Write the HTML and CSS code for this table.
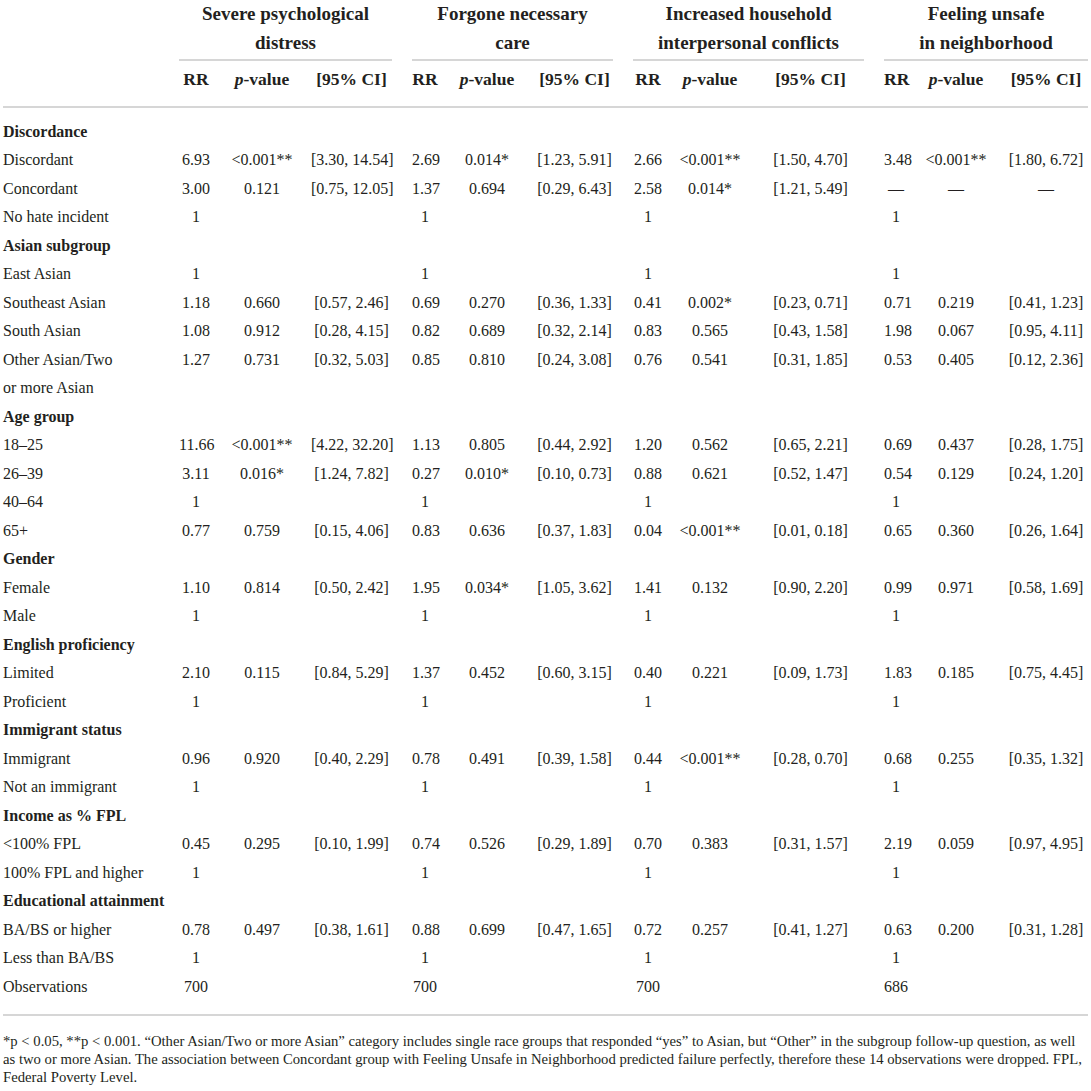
FILE: index.html
```html
<!DOCTYPE html>
<html lang="en">
<head>
  <meta charset="UTF-8">
  <title>Table</title>
  <link rel="stylesheet" href="styles.css">
</head>
<body>
  <table class="rr">
    <colgroup>
      <col class="c-lbl">
      <col class="c-rr1"><col class="c-p1"><col class="c-ci1">
      <col class="c-rr2"><col class="c-p2"><col class="c-ci2">
      <col class="c-rr3"><col class="c-p3"><col class="c-ci3">
      <col class="c-rr4"><col class="c-p4"><col class="c-ci4">
    </colgroup>
    <thead>
      <tr>
        <th class="lbl" rowspan="2"></th>
        <th class="g grp" colspan="3"><div class="grp-title">Severe psychological<br>distress</div></th>
        <th class="g grp" colspan="3"><div class="grp-title">Forgone necessary<br>care</div></th>
        <th class="g grp" colspan="3"><div class="grp-title">Increased household<br>interpersonal conflicts</div></th>
        <th class="g grp" colspan="3"><div class="grp-title">Feeling unsafe<br>in neighborhood</div></th>
      </tr>
      <tr class="sub">
        <th class="g">RR</th><th><i>p</i>-value</th><th>[95% CI]</th>
        <th class="g">RR</th><th><i>p</i>-value</th><th>[95% CI]</th>
        <th class="g">RR</th><th><i>p</i>-value</th><th>[95% CI]</th>
        <th class="g">RR</th><th><i>p</i>-value</th><th>[95% CI]</th>
      </tr>
    </thead>
    <tbody>
      <tr class="first"><td class="sec" colspan="13">Discordance</td></tr>
      <tr><td class="lbl">Discordant</td>
        <td class="g">6.93</td><td>&lt;0.001**</td><td>[3.30, 14.54]</td>
        <td class="g">2.69</td><td>0.014*</td><td>[1.23, 5.91]</td>
        <td class="g">2.66</td><td>&lt;0.001**</td><td>[1.50, 4.70]</td>
        <td class="g">3.48</td><td>&lt;0.001**</td><td>[1.80, 6.72]</td></tr>
      <tr><td class="lbl">Concordant</td>
        <td class="g">3.00</td><td>0.121</td><td>[0.75, 12.05]</td>
        <td class="g">1.37</td><td>0.694</td><td>[0.29, 6.43]</td>
        <td class="g">2.58</td><td>0.014*</td><td>[1.21, 5.49]</td>
        <td class="g">—</td><td>—</td><td>—</td></tr>
      <tr><td class="lbl">No hate incident</td>
        <td class="g">1</td><td></td><td></td>
        <td class="g">1</td><td></td><td></td>
        <td class="g">1</td><td></td><td></td>
        <td class="g">1</td><td></td><td></td></tr>

      <tr><td class="sec" colspan="13">Asian subgroup</td></tr>
      <tr><td class="lbl">East Asian</td>
        <td class="g">1</td><td></td><td></td>
        <td class="g">1</td><td></td><td></td>
        <td class="g">1</td><td></td><td></td>
        <td class="g">1</td><td></td><td></td></tr>
      <tr><td class="lbl">Southeast Asian</td>
        <td class="g">1.18</td><td>0.660</td><td>[0.57, 2.46]</td>
        <td class="g">0.69</td><td>0.270</td><td>[0.36, 1.33]</td>
        <td class="g">0.41</td><td>0.002*</td><td>[0.23, 0.71]</td>
        <td class="g">0.71</td><td>0.219</td><td>[0.41, 1.23]</td></tr>
      <tr><td class="lbl">South Asian</td>
        <td class="g">1.08</td><td>0.912</td><td>[0.28, 4.15]</td>
        <td class="g">0.82</td><td>0.689</td><td>[0.32, 2.14]</td>
        <td class="g">0.83</td><td>0.565</td><td>[0.43, 1.58]</td>
        <td class="g">1.98</td><td>0.067</td><td>[0.95, 4.11]</td></tr>
      <tr><td class="lbl">Other Asian/Two<br>or more Asian</td>
        <td class="g">1.27</td><td>0.731</td><td>[0.32, 5.03]</td>
        <td class="g">0.85</td><td>0.810</td><td>[0.24, 3.08]</td>
        <td class="g">0.76</td><td>0.541</td><td>[0.31, 1.85]</td>
        <td class="g">0.53</td><td>0.405</td><td>[0.12, 2.36]</td></tr>

      <tr><td class="sec" colspan="13">Age group</td></tr>
      <tr><td class="lbl">18–25</td>
        <td class="g">11.66</td><td>&lt;0.001**</td><td>[4.22, 32.20]</td>
        <td class="g">1.13</td><td>0.805</td><td>[0.44, 2.92]</td>
        <td class="g">1.20</td><td>0.562</td><td>[0.65, 2.21]</td>
        <td class="g">0.69</td><td>0.437</td><td>[0.28, 1.75]</td></tr>
      <tr><td class="lbl">26–39</td>
        <td class="g">3.11</td><td>0.016*</td><td>[1.24, 7.82]</td>
        <td class="g">0.27</td><td>0.010*</td><td>[0.10, 0.73]</td>
        <td class="g">0.88</td><td>0.621</td><td>[0.52, 1.47]</td>
        <td class="g">0.54</td><td>0.129</td><td>[0.24, 1.20]</td></tr>
      <tr><td class="lbl">40–64</td>
        <td class="g">1</td><td></td><td></td>
        <td class="g">1</td><td></td><td></td>
        <td class="g">1</td><td></td><td></td>
        <td class="g">1</td><td></td><td></td></tr>
      <tr><td class="lbl">65+</td>
        <td class="g">0.77</td><td>0.759</td><td>[0.15, 4.06]</td>
        <td class="g">0.83</td><td>0.636</td><td>[0.37, 1.83]</td>
        <td class="g">0.04</td><td>&lt;0.001**</td><td>[0.01, 0.18]</td>
        <td class="g">0.65</td><td>0.360</td><td>[0.26, 1.64]</td></tr>

      <tr><td class="sec" colspan="13">Gender</td></tr>
      <tr><td class="lbl">Female</td>
        <td class="g">1.10</td><td>0.814</td><td>[0.50, 2.42]</td>
        <td class="g">1.95</td><td>0.034*</td><td>[1.05, 3.62]</td>
        <td class="g">1.41</td><td>0.132</td><td>[0.90, 2.20]</td>
        <td class="g">0.99</td><td>0.971</td><td>[0.58, 1.69]</td></tr>
      <tr><td class="lbl">Male</td>
        <td class="g">1</td><td></td><td></td>
        <td class="g">1</td><td></td><td></td>
        <td class="g">1</td><td></td><td></td>
        <td class="g">1</td><td></td><td></td></tr>

      <tr><td class="sec" colspan="13">English proficiency</td></tr>
      <tr><td class="lbl">Limited</td>
        <td class="g">2.10</td><td>0.115</td><td>[0.84, 5.29]</td>
        <td class="g">1.37</td><td>0.452</td><td>[0.60, 3.15]</td>
        <td class="g">0.40</td><td>0.221</td><td>[0.09, 1.73]</td>
        <td class="g">1.83</td><td>0.185</td><td>[0.75, 4.45]</td></tr>
      <tr><td class="lbl">Proficient</td>
        <td class="g">1</td><td></td><td></td>
        <td class="g">1</td><td></td><td></td>
        <td class="g">1</td><td></td><td></td>
        <td class="g">1</td><td></td><td></td></tr>

      <tr><td class="sec" colspan="13">Immigrant status</td></tr>
      <tr><td class="lbl">Immigrant</td>
        <td class="g">0.96</td><td>0.920</td><td>[0.40, 2.29]</td>
        <td class="g">0.78</td><td>0.491</td><td>[0.39, 1.58]</td>
        <td class="g">0.44</td><td>&lt;0.001**</td><td>[0.28, 0.70]</td>
        <td class="g">0.68</td><td>0.255</td><td>[0.35, 1.32]</td></tr>
      <tr><td class="lbl">Not an immigrant</td>
        <td class="g">1</td><td></td><td></td>
        <td class="g">1</td><td></td><td></td>
        <td class="g">1</td><td></td><td></td>
        <td class="g">1</td><td></td><td></td></tr>

      <tr><td class="sec" colspan="13">Income as % FPL</td></tr>
      <tr><td class="lbl">&lt;100% FPL</td>
        <td class="g">0.45</td><td>0.295</td><td>[0.10, 1.99]</td>
        <td class="g">0.74</td><td>0.526</td><td>[0.29, 1.89]</td>
        <td class="g">0.70</td><td>0.383</td><td>[0.31, 1.57]</td>
        <td class="g">2.19</td><td>0.059</td><td>[0.97, 4.95]</td></tr>
      <tr><td class="lbl">100% FPL and higher</td>
        <td class="g">1</td><td></td><td></td>
        <td class="g">1</td><td></td><td></td>
        <td class="g">1</td><td></td><td></td>
        <td class="g">1</td><td></td><td></td></tr>

      <tr><td class="sec" colspan="13">Educational attainment</td></tr>
      <tr><td class="lbl">BA/BS or higher</td>
        <td class="g">0.78</td><td>0.497</td><td>[0.38, 1.61]</td>
        <td class="g">0.88</td><td>0.699</td><td>[0.47, 1.65]</td>
        <td class="g">0.72</td><td>0.257</td><td>[0.41, 1.27]</td>
        <td class="g">0.63</td><td>0.200</td><td>[0.31, 1.28]</td></tr>
      <tr><td class="lbl">Less than BA/BS</td>
        <td class="g">1</td><td></td><td></td>
        <td class="g">1</td><td></td><td></td>
        <td class="g">1</td><td></td><td></td>
        <td class="g">1</td><td></td><td></td></tr>
      <tr class="last"><td class="lbl">Observations</td>
        <td class="g">700</td><td></td><td></td>
        <td class="g">700</td><td></td><td></td>
        <td class="g">700</td><td></td><td></td>
        <td class="g">686</td><td></td><td></td></tr>
    </tbody>
  </table>

  <p class="note">*p &lt; 0.05, **p &lt; 0.001. “Other Asian/Two or more Asian” category includes single race groups that responded “yes” to Asian, but “Other” in the subgroup follow-up question, as well as two or more Asian. The association between Concordant group with Feeling Unsafe in Neighborhood predicted failure perfectly, therefore these 14 observations were dropped. FPL, Federal Poverty Level.</p>
</body>
</html>
```

FILE: styles.css
```css
*{
  margin: 0;
  padding: 0;
}
body{
  padding: 0 3px;
  background: #fff;
  color: #231f20;
  font-family: "Liberation Serif", "Times New Roman", serif;
  font-size: 16px;
}
.rr{
  width: 1085px;
  table-layout: fixed;
  border-collapse: collapse;
}
.c-lbl{ width: 156px; }
.c-rr1{ width: 54px; }
.c-p1{ width: 98px; }
.c-ci1{ width: 81px; }
.c-rr2{ width: 46px; }
.c-p2{ width: 98px; }
.c-ci2{ width: 77px; }
.c-rr3{ width: 50px; }
.c-p3{ width: 94px; }
.c-ci3{ width: 107px; }
.c-rr4{ width: 44px; }
.c-p4{ width: 96px; }
.c-ci4{ width: 84px; }

.rr th,
.rr td{
  padding: 0;
  line-height: 28.5px;
  text-align: center;
  vertical-align: top;
  white-space: nowrap;
  font-weight: normal;
}
.rr th{
  font-weight: bold;
}
.rr .g{
  padding-left: 20px;
}
.grp-title{
  font-size: 19px;
  line-height: 28.5px;
  padding-bottom: 2px;
  border-bottom: 2px solid #d6d6d6;
}
.rr th.lbl{
  border-bottom: 2px solid #d6d6d6;
}
.sub th{
  font-size: 17.5px;
  padding-top: 4px;
  padding-bottom: 12px;
  border-bottom: 2px solid #d6d6d6;
}
.rr td.lbl,
.rr td.sec{
  text-align: left;
}
.rr td.sec{
  font-weight: bold;
}
.first td{
  padding-top: 10px;
}
.last td{
  padding-bottom: 13px;
  border-bottom: 2px solid #d6d6d6;
}
.note{
  margin-top: 16px;
  font-size: 14.7px;
  line-height: 18px;
}
```
